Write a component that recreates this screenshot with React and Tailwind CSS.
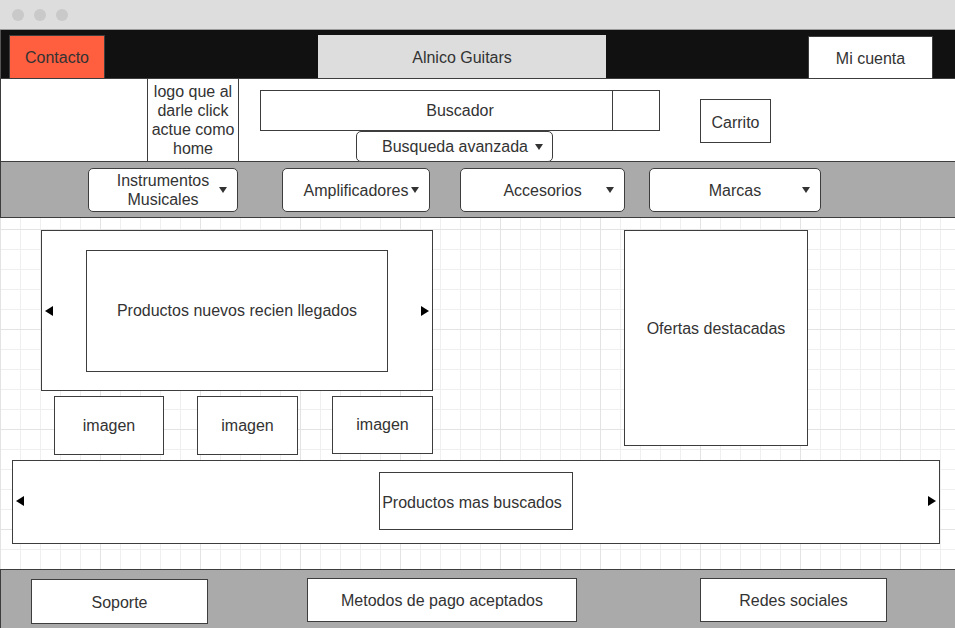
import React from "react";

const Caret = () => (
  <svg width="8" height="6" viewBox="0 0 8 6" className="shrink-0">
    <path d="M0 0 L8 0 L4 6 Z" fill="#333" />
  </svg>
);

const ArrowLeft = () => (
  <svg width="8" height="10" viewBox="0 0 8 10" className="shrink-0">
    <path d="M8 0 L8 10 L0 5 Z" fill="#000" />
  </svg>
);

const ArrowRight = () => (
  <svg width="8" height="10" viewBox="0 0 8 10" className="shrink-0">
    <path d="M0 0 L0 10 L8 5 Z" fill="#000" />
  </svg>
);

const NavButton = ({ className, children }) => (
  <div
    className={`relative h-[44px] rounded-[5px] border border-[#3d3d3d] bg-white flex items-center justify-center text-center leading-[19px] ${className}`}
  >
    {children}
    <div className="absolute right-[10px] top-[18px]">
      <Caret />
    </div>
  </div>
);

const Box = ({ className, children }) => (
  <div
    className={`border border-[#3d3d3d] bg-white flex items-center justify-center text-center ${className}`}
  >
    {children}
  </div>
);

export default function App() {
  return (
    <div className="w-[955px] h-[628px] overflow-hidden bg-white text-[#333] text-base font-['Liberation_Sans',Arial,sans-serif]">
      {/* ventana */}
      <div className="h-[30px] bg-[#dddddd] border-b border-[#9a9a9a] flex items-center pl-[12px] gap-[10px]">
        <div className="w-[12px] h-[12px] rounded-full bg-[#c9c9c9]" />
        <div className="w-[12px] h-[12px] rounded-full bg-[#c9c9c9]" />
        <div className="w-[12px] h-[12px] rounded-full bg-[#c9c9c9]" />
      </div>

      {/* barra superior */}
      <div className="h-[48px] bg-[#111111] border-l border-[#555] flex items-end">
        <div className="ml-[8px] w-[96px] h-[43px] bg-[#ff5e3f] border border-[#3d3d3d] border-b-0 flex items-center justify-center pt-[2px]">
          Contacto
        </div>
        <div className="ml-[213px] w-[288px] h-[43px] bg-[#dddddd] flex items-center justify-center pt-[2px]">
          Alnico Guitars
        </div>
        <div className="ml-[202px] w-[125px] h-[42px] bg-white border border-[#3d3d3d] border-b-0 flex items-center justify-center pt-[2px]">
          Mi cuenta
        </div>
      </div>

      {/* logo y buscador */}
      <div className="h-[83px] bg-white border-l border-t border-[#3d3d3d] flex items-start">
        <div className="ml-[146px] w-[92px] h-full border-x border-[#3d3d3d] flex items-center justify-center text-center leading-[19px] pb-[1px]">
          logo que al darle click actue como home
        </div>
        <div className="ml-[21px] mt-[11px] flex flex-col">
          <div className="relative w-[400px] h-[41px] border border-[#3d3d3d] flex items-center justify-center">
            Buscador
            <div className="absolute right-[46px] top-0 bottom-0 border-l border-[#3d3d3d]" />
          </div>
          <div className="ml-[96px] w-[197px] h-[31px] rounded-[5px] border border-[#3d3d3d] bg-white flex items-center justify-center gap-[7px] pl-[16px]">
            Busqueda avanzada
            <Caret />
          </div>
        </div>
        <Box className="ml-[40px] mt-[20px] w-[71px] h-[44px] pt-[3px]">Carrito</Box>
      </div>

      {/* categorias */}
      <div className="h-[57px] bg-[#aaaaaa] border-y border-l border-[#3d3d3d] flex items-start pt-[6px]">
        <NavButton className="ml-[87px] w-[150px]">
          Instrumentos
          <br />
          Musicales
        </NavButton>
        <NavButton className="ml-[44px] w-[148px]">Amplificadores</NavButton>
        <NavButton className="ml-[30px] w-[165px]">Accesorios</NavButton>
        <NavButton className="ml-[24px] w-[172px]">Marcas</NavButton>
      </div>

      {/* contenido */}
      <div className="h-[351px] bg-white bg-[linear-gradient(to_right,#e3e3e3_1px,transparent_1px),linear-gradient(to_bottom,#e3e3e3_1px,transparent_1px),linear-gradient(to_right,#efefef_1px,transparent_1px),linear-gradient(to_bottom,#efefef_1px,transparent_1px)] bg-[size:100px_100px,100px_100px,20px_20px,20px_20px] bg-[position:0_11px] flex flex-col pt-[12px]">
        <div className="flex items-start">
          <div className="ml-[41px] flex flex-col">
            <div className="w-[392px] h-[161px] border border-[#3d3d3d] bg-white flex items-center justify-between px-[3px]">
              <ArrowLeft />
              <Box className="w-[302px] h-[122px]">Productos nuevos recien llegados</Box>
              <ArrowRight />
            </div>
            <div className="mt-[5px] flex items-start">
              <Box className="ml-[13px] w-[110px] h-[59px]">imagen</Box>
              <Box className="ml-[33px] w-[101px] h-[59px]">imagen</Box>
              <Box className="ml-[34px] w-[101px] h-[58px]">imagen</Box>
            </div>
          </div>
          <Box className="ml-[191px] w-[184px] h-[216px] pb-[18px]">Ofertas destacadas</Box>
        </div>
        <div className="ml-[12px] mt-[5px] w-[928px] h-[84px] border border-[#3d3d3d] bg-white flex items-center justify-between px-[3px] pb-[2px]">
          <ArrowLeft />
          <Box className="w-[194px] h-[58px] pr-[8px] pt-[3px]">Productos mas buscados</Box>
          <ArrowRight />
        </div>
      </div>

      {/* pie */}
      <div className="h-[59px] bg-[#aaaaaa] border-t border-l border-[#3d3d3d] flex items-start">
        <Box className="ml-[30px] mt-[9px] w-[177px] h-[45px] pt-[2px]">Soporte</Box>
        <Box className="ml-[99px] mt-[8px] w-[270px] h-[44px] pt-[1px]">Metodos de pago aceptados</Box>
        <Box className="ml-[123px] mt-[8px] w-[187px] h-[44px] pt-[1px]">Redes sociales</Box>
      </div>
    </div>
  );
}
